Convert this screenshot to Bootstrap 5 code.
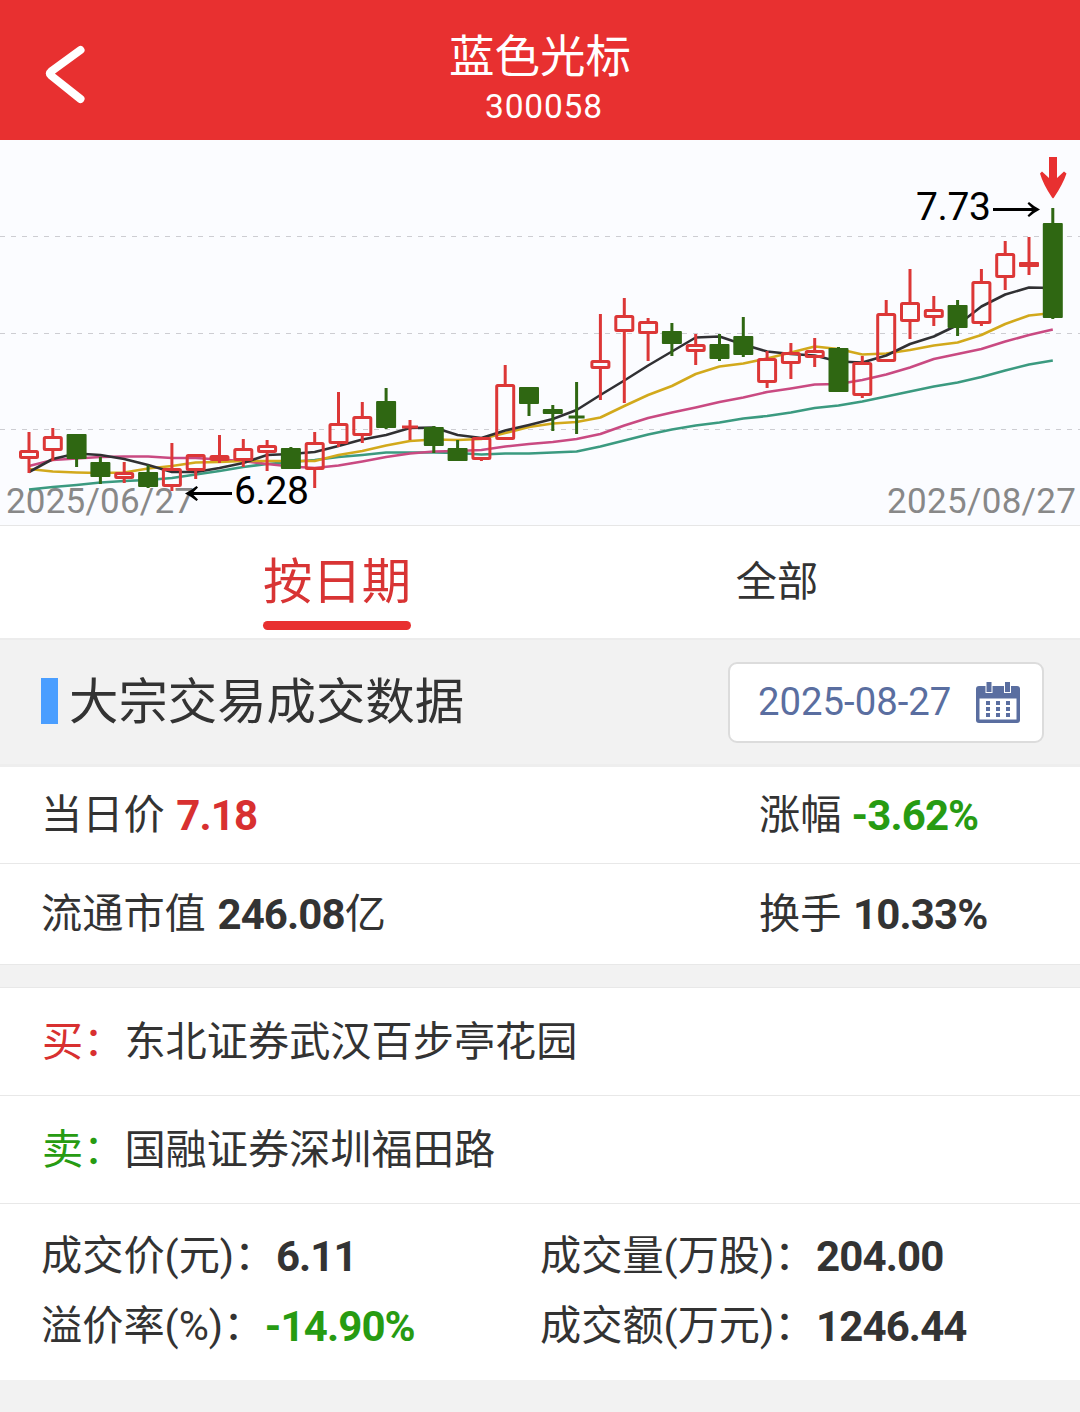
<!DOCTYPE html>
<html lang="zh-CN">
<head>
<meta charset="utf-8">
<meta name="viewport" content="width=device-width, initial-scale=1">
<title>蓝色光标 300058</title>
<link rel="stylesheet" href="https://cdn.jsdelivr.net/npm/bootstrap@5.3.0/dist/css/bootstrap.min.css">
<style>
  body{font-family:Roboto,"Noto Sans CJK SC",sans-serif;font-size:41.2px;line-height:60px;color:#333;background:#f2f2f2;overflow-x:hidden}
  .topbar{height:140px;background:#e83030;padding-top:28px}
  .topbar h1{font-size:45.5px;line-height:60px;font-weight:400}
  .code-no{font-size:33.5px;line-height:40px;letter-spacing:.8px;padding-left:8px;margin-top:-1px}
  .back-btn{left:43px;top:44px}
  .kline{height:386px;background:#fbfcff;border-bottom:1px solid #e6e6e6}
  .tabs-row{height:112px;padding:0 117px}
  .tab-item{height:112px}
  .tab-item .lbl-on{font-size:49.4px;line-height:72px;padding-top:20px;color:#d83434}
  .tab-item .bar-on{width:148px;height:9px;background:#e83030;margin-top:3px}
  .tab-item .lbl-off{line-height:60px;padding-top:26px;padding-left:1px}
  .section-head{height:129px;border-top:2px solid #ececec;padding:0 36px 0 41px;border-bottom:3px solid #eee}
  .blue-mark{width:17px;height:46px;background:#4a9eff;margin-right:11px;margin-top:-2px}
  .section-head h2{font-size:49.4px;line-height:72px;font-weight:400}
  .date-box{width:316px;height:81px;border:2px solid #dcdcdc;border-radius:9px;color:#5a6ea0;font-size:38.3px;padding:0 22px 0 28px}
  .date-box svg{margin-top:1px}
  .info-line{border-bottom:1px solid #e8e8e8;padding-left:41px}
  .info-line .right-cell{width:321px}
  .h-a{height:97px}
  .h-b{height:101px}
  .h-c{height:108px;padding-left:42px}
  .num{font-weight:700;font-size:42px;letter-spacing:-.9px;vertical-align:-1px}
  .info-line .num{margin-left:1.5px}
  .gap-band{height:23px;border-bottom:1px solid #e8e8e8}
  .deal{height:176px;padding:22px 0 0 41px}
  .deal .line{height:70px}
  .deal .first-col{width:499px}
  .deal .num{margin-left:.5px}
  .red{color:#d83030}.green{color:#279b12}
</style>
<script src="https://cdn.jsdelivr.net/npm/bootstrap@5.3.0/dist/js/bootstrap.bundle.min.js"></script>
</head>
<body>
<header class="topbar position-relative text-white text-center">
  <svg class="back-btn position-absolute" width="44" height="62" viewBox="0 0 44 62" fill="none" stroke="#fff" stroke-width="8" stroke-linecap="round" stroke-linejoin="round"><path d="M37.500 6 8 27.500Q5.500 29.500 8 31.500L37.500 55"/></svg>
  <h1 class="mb-0">蓝色光标</h1>
  <div class="code-no">300058</div>
</header>

<div class="kline">
  <svg id="chart" class="d-block" width="1080" height="385" viewBox="0 140 1080 385" font-family="Roboto, sans-serif">
    <g stroke="#cdcdd2" stroke-width="1" stroke-dasharray="5 6"><path d="M0 236.500H1080M0 333.500H1080M0 429.500H1080"/></g>
    <g fill="#888" font-size="35"><text x="6" y="513" textLength="188">2025/06/27</text><text x="887" y="513" textLength="189">2025/08/27</text></g>
    <g id="averages" fill="none" stroke-width="2.600" stroke-linejoin="round"></g>
    <g id="candles" stroke-width="3"></g>
    <g fill="#000" font-size="39"><text x="916" y="220" textLength="75">7.73</text><text x="234" y="504" textLength="75">6.28</text></g>
    <g fill="none" stroke="#000" stroke-width="2.800"><path d="M993 209.500H1037M188 493.500H232"/></g>
    <path d="M1040 209.500Q1034 206.500 1029 202L1027.500 203.500 1033.500 209.500 1027.500 215.500 1029 217Q1034 212.500 1040 209.500ZM185 493.500Q191 490.500 196.500 486L198 487.500 192 493.500 198 499.500 196.500 501Q191 496.500 185 493.500Z"/>
    <path fill="#e83030" d="M1049 157H1057V178L1064 171.500 1066.500 173.500Q1063 184 1054 197.500L1053 198.500 1052 197.500Q1043 184 1040 173.500L1042 171.500 1049 178Z"/>
  </svg>
</div>

<nav class="tabs-row bg-white d-flex">
  <div class="tab-item w-50 d-flex flex-column align-items-center" style="padding-left:17px"><div class="lbl-on">按日期</div><div class="bar-on rounded-pill"></div></div>
  <div class="tab-item w-50 text-center" style="padding-left:50px"><div class="lbl-off">全部</div></div>
</nav>

<section class="section-head d-flex align-items-center">
  <span class="blue-mark"></span>
  <h2 class="mb-0 me-auto">大宗交易成交数据</h2>
  <div class="date-box bg-white d-flex align-items-center justify-content-between">
    <span>2025-08-27</span>
    <svg width="44" height="42" viewBox="0 0 44 42"><path fill="#5a6ea0" d="M3 4H41Q44 4 44 7V38Q44 41 41 41H3Q0 41 0 38V7Q0 4 3 4Z"/><path fill="#fff" d="M3.500 16.500H40.500V37.500H3.500ZM9.500 4H16.500V11H9.500ZM28 4H35V11H28Z"/><path fill="#5a6ea0" d="M10.500 0H15.500V10H10.500ZM29 0H34V10H29Z"/><path stroke="#5a6ea0" stroke-width="4" stroke-dasharray="4 6" d="M10 21H35M10 27H35M10 33H35"/></svg>
  </div>
</section>

<main class="bg-white">
  <div class="info-line h-a d-flex align-items-center justify-content-between"><div>当日价 <span class="num red">7.18</span></div><div class="right-cell">涨幅 <span class="num green ms-0">-3.62%</span></div></div>
  <div class="info-line h-b d-flex align-items-center justify-content-between"><div>流通市值 <span class="num">246.08</span>亿</div><div class="right-cell">换手 <span class="num">10.33%</span></div></div>
</main>
<div class="gap-band"></div>
<section class="bg-white">
  <div class="info-line h-c d-flex align-items-center"><span class="red">买：</span><span>东北证券武汉百步亭花园</span></div>
  <div class="info-line h-c d-flex align-items-center"><span class="green">卖：</span><span>国融证券深圳福田路</span></div>
  <div class="deal">
    <div class="d-flex line"><div class="first-col">成交价(元)：<span class="num">6.11</span></div><div>成交量(万股)：<span class="num">204.00</span></div></div>
    <div class="d-flex line"><div class="first-col">溢价率(%)：<span class="num green">-14.90%</span></div><div>成交额(万元)：<span class="num">1246.44</span></div></div>
  </div>
</section>

<script>
  // Daily bars: direction, body top, body bottom, wick top, wick bottom
  const bars = [
    'r',450,459,432,473,'r',436,451,428,461,'g',434,459,434,467,'g',462,477,457,484,'r',472,479,462,483,'g',472,487,465,488,
    'r',468,487,443,491,'r',454,471,454,479,'r',455,461,435,463,'r',448,461,439,467,'r',445,453,440,471,'g',448,469,447,469,
    'r',442,470,432,488,'r',423,444,392,447,'r',416,436,402,443,'g',401,428,388,429,'r',426,428,420,440,'g',427,446,426,453,
    'g',448,461,440,461,'r',437,460,437,461,'r',384,440,365,440,'g',387,404,387,416,'g',409,414,405,431,'g',416,418,382,434,
    'r',360,369,314,400,'r',315,332,298,403,'r',321,334,318,361,'g',331,344,323,356,'r',344,352,334,365,'g',344,359,334,361,
    'g',336,355,317,357,'r',358,383,351,388,'r',352,364,343,379,'r',350,358,338,367,'g',348,392,347,392,'r',362,396,356,398,
    'r',313,362,300,362,'r',302,322,269,339,'r',309,318,296,326,'g',305,328,300,336,'r',281,324,269,326,'r',253,278,241,290,
    'r',262,267,237,275,'g',223,318,208,319];
  const lines = {
    '#3b9a80':[489.5,487,485,482.5,481,480,478,474.5,471,467,464,462,460,457,455,452.5,452.5,452.5,453,454.5,453.5,453.5,452.5,451.5,446.5,440.5,434.5,429.5,425.5,422.5,418.5,416,412.5,408,405.5,401.5,396.5,391.5,386.5,382.5,377,370.5,364.5,360.5],
    '#c94a82':[466,460,458.5,457,456.5,456.5,458,458,459.5,461,464,466.5,468,465.5,461.5,457,453.5,451.5,451,450,446.5,444,442,439,434,425.5,418,412.5,407.5,402,397.5,392,388.5,384.5,384,380,374.5,367.5,359,354,349,341.5,335,329.5],
    '#d2a91c':[469,471.5,472.5,473,472.5,468.5,466,462.5,462,461,461,461,461,455,451,445.5,441,439.5,440,439,433,427,423.5,422,417.5,406,395,386,374,366.5,363.5,358.5,352.5,346.5,349,354.5,353.5,350,345.5,342.5,335,324,315.5,313],
    '#303033':[472,459,453.5,455,459,465,472,472,468,463,455,454,452,446,439.5,435,428,427.5,435,438,430.5,425,419,410,395,380.5,365.5,351.5,337.5,336.5,344.5,351.5,354,355.5,361.5,362.5,355.5,344,336.5,325,306.5,294.5,287.5,288]
  };
  const xAt = i => +(29 + i * 23.81).toFixed(1);
  document.getElementById('averages').innerHTML = Object.entries(lines).map(([c, ys]) =>
    `<polyline stroke="${c}" points="${ys.map((y, i) => xAt(i) + ',' + y).join(' ')}"/>`).join('');
  let out = '';
  for (let i = 0; i < bars.length / 5; i++) {
    const [d, t, b, h, l] = bars.slice(i * 5, i * 5 + 5), x = xAt(i), c = d === 'r' ? '#dc3737' : '#2f6712';
    out += `<path stroke="${c}" d="M${x} ${h}V${t}M${x} ${b}V${l}"/>`;
    if (b - t < 3) out += `<path stroke="${c}" d="M${x - 8} ${(t + b) / 2}H${x + 8}"/>`;
    else if (d === 'g' || b - t < 6 && i === 42) out += `<rect fill="${c}" x="${x - 10}" y="${t}" width="20" height="${b - t}" rx="1"/>`;
    else out += `<rect fill="none" stroke="${c}" x="${x - 8.5}" y="${t + 1.5}" width="17" height="${b - t - 3}" rx="1"/>`;
  }
  document.getElementById('candles').innerHTML = out;
</script>
</body>
</html>
